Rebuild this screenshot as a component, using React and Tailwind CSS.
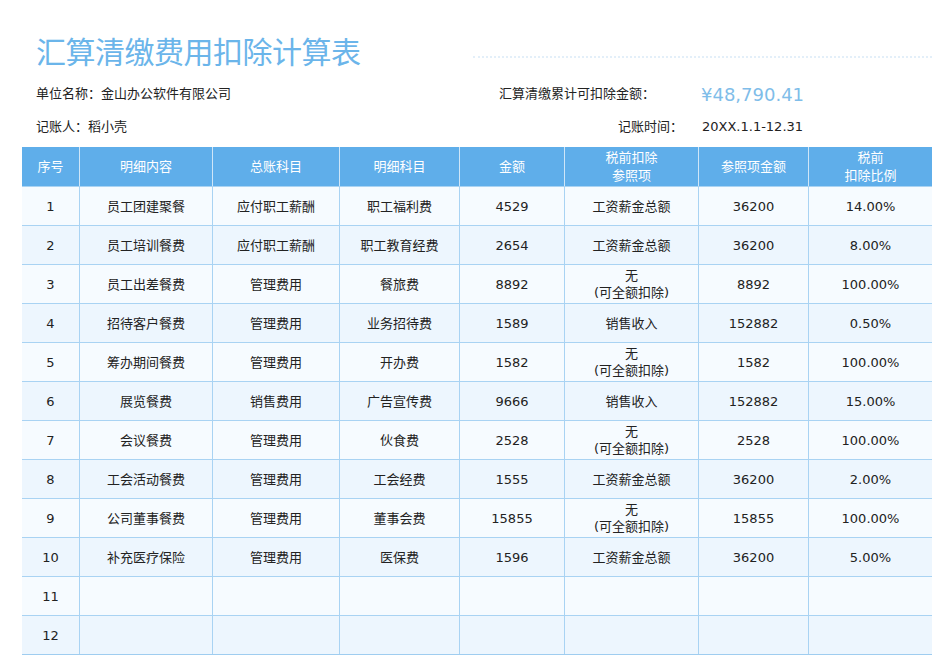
const rows=[["1","员工团建聚餐","应付职工薪酬","职工福利费","4529","工资薪金总额","36200","14.00%"],["2","员工培训餐费","应付职工薪酬","职工教育经费","2654","工资薪金总额","36200","8.00%"],["3","员工出差餐费","管理费用","餐旅费","8892","无\n(可全额扣除)","8892","100.00%"],["4","招待客户餐费","管理费用","业务招待费","1589","销售收入","152882","0.50%"],["5","筹办期间餐费","管理费用","开办费","1582","无\n(可全额扣除)","1582","100.00%"],["6","展览餐费","销售费用","广告宣传费","9666","销售收入","152882","15.00%"],["7","会议餐费","管理费用","伙食费","2528","无\n(可全额扣除)","2528","100.00%"],["8","工会活动餐费","管理费用","工会经费","1555","工资薪金总额","36200","2.00%"],["9","公司董事餐费","管理费用","董事会费","15855","无\n(可全额扣除)","15855","100.00%"],["10","补充医疗保险","管理费用","医保费","1596","工资薪金总额","36200","5.00%"],["11","","","","","","",""],["12","","","","","","",""]];
const heads=["序号","明细内容","总账科目","明细科目","金额","税前扣除\n参照项","参照项金额","税前\n扣除比例"];
const cols="grid grid-cols-[58px_133px_127px_120px_105px_134px_110px_123px]";
export default function App(){return(
<div className="w-[950px] h-[672px] bg-white text-[13px] text-[#222]" style={{fontFamily:'"DejaVu Sans","Noto Sans CJK SC",sans-serif'}}>
<div className="flex items-end pl-[36px] pt-[28px] h-[70px]">
<div className="text-[30px] leading-[40px] text-[#6bb5ea] tracking-[-0.5px]" style={{fontFamily:'"Noto Sans CJK SC",sans-serif'}}>汇算清缴费用扣除计算表</div>
<div className="flex-1 ml-[112px] mr-[18px] mb-[10px] h-[4px] border-t-2 border-dotted border-[#e3eff9]"></div>
</div>
<div className="flex h-[46px] items-center pl-[36px] pt-[2px]">
<div className="w-[463px]">单位名称：金山办公软件有限公司</div>
<div className="w-[202px]">汇算清缴累计可扣除金额：</div>
<div className="text-[18px] text-[#7fbde9]">¥48,790.41</div>
</div>
<div className="flex h-[22px] items-center pl-[36px]">
<div className="w-[582px]">记账人：稻小壳</div>
<div className="w-[84px]">记账时间：</div>
<div>20XX.1.1-12.31</div>
</div>
<div className="ml-[22px] mt-[9px] w-[910px] border-b border-[#9fcdf0]">
<div className={cols+" h-[39px] bg-[#5faeea] text-white"}>
{heads.map((h,i)=><div key={i} className="flex items-center justify-center text-center whitespace-pre-line leading-[18px] border-r border-[#cfe6f8] last:border-r-0">{h}</div>)}
</div>
{rows.map((r,j)=><div key={j} className={cols+" h-[39px] border-t border-[#a9d3f3] "+(j%2?"bg-[#edf6fe]":"bg-[#f6fbff]")}>
{r.map((c,i)=><div key={i} className="flex items-center justify-center text-center whitespace-pre-line leading-[17px] border-r border-[#a9d3f3] last:border-r-0">{c}</div>)}
</div>)}
</div>
</div>)}
